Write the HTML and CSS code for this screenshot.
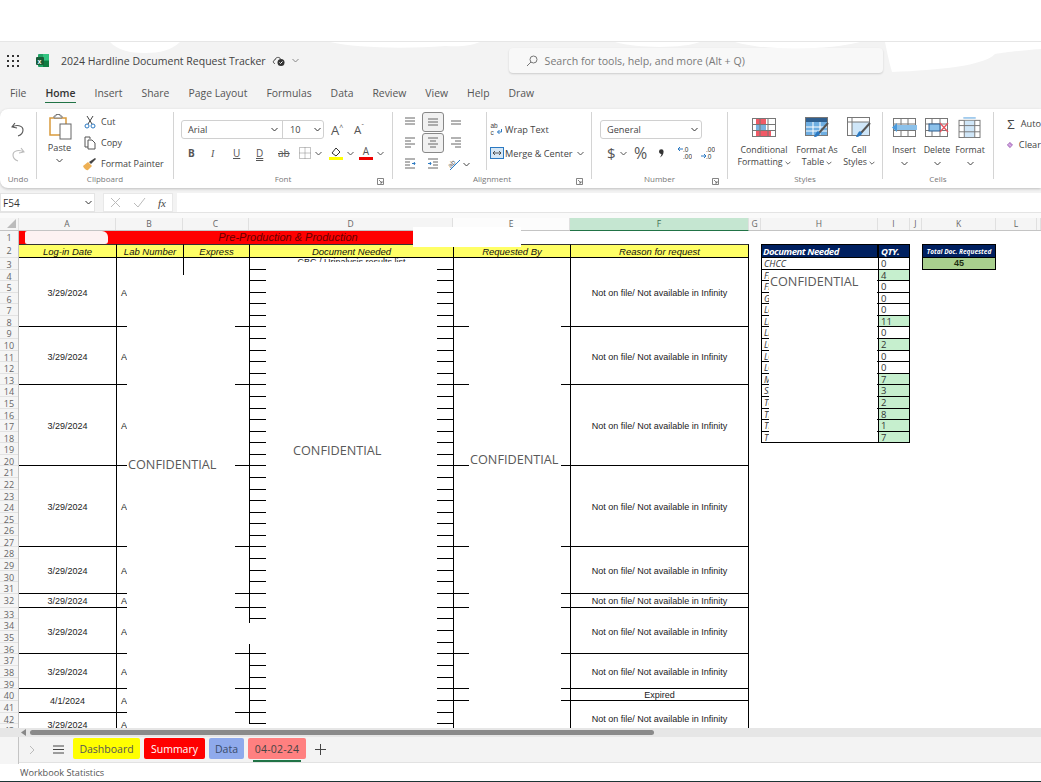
FILE: index.html
```html
<!DOCTYPE html>
<html lang="en">
<head>
<meta charset="utf-8">
<title>2024 Hardline Document Request Tracker</title>
<link rel="stylesheet" href="styles.css">
</head>
<body>
<div class="app">
  <div class="browser-strip"></div>
  <header class="titlebar">
    <svg class="waffle" width="13" height="12" viewBox="0 0 13 12"><g fill="#333"><rect x="0" y="0" width="2" height="2"/><rect x="5" y="0" width="2" height="2"/><rect x="10" y="0" width="2" height="2"/><rect x="0" y="5" width="2" height="2"/><rect x="5" y="5" width="2" height="2"/><rect x="10" y="5" width="2" height="2"/><rect x="0" y="10" width="2" height="2"/><rect x="5" y="10" width="2" height="2"/><rect x="10" y="10" width="2" height="2"/></g></svg>
    <svg class="xl" width="13" height="13" viewBox="0 0 13 13"><rect x="2" y="0" width="11" height="13" rx="1" fill="#21a366"/><rect x="7" y="0" width="6" height="6" fill="#33c481"/><rect x="7" y="7" width="6" height="6" fill="#107c41"/><rect x="0" y="3" width="8" height="8" rx="1" fill="#185c37"/><text x="1.6" y="9.6" class="xl-x">x</text></svg>
    <span class="doc-title">2024 Hardline Document Request Tracker</span>
    <svg class="cloud" width="14" height="12" viewBox="0 0 14 12"><path d="M3 8.5C.8 8.5.8 5.2 3 5 3.4 2 7.500 1.500 8.500 4" fill="none" stroke="#444"/><circle cx="9" cy="7.500" r="3.500" fill="#333"/><path d="M7.500 7.500l1 1 2-2" fill="none" stroke="#fff"/></svg>
    <svg class="chev title-chev" width="7" height="5" viewBox="0 0 7 5"><path d="M.5 1l3 3 3-3" fill="none" stroke="#888"/></svg>
    <div class="search">
      <svg width="12" height="12" viewBox="0 0 12 12"><circle cx="7.500" cy="4.500" r="3.500" fill="none" stroke="#777"/><path d="M5 7L1 11" stroke="#777"/></svg>
      <span>Search for tools, help, and more (Alt + Q)</span>
    </div>
  </header>
  <nav class="menu">
    <span>File</span><span class="on">Home</span><span>Insert</span><span>Share</span><span>Page Layout</span><span>Formulas</span><span>Data</span><span>Review</span><span>View</span><span>Help</span><span>Draw</span>
  </nav>

  <section class="ribbon">
    <div class="group g-undo">
      <div class="g-body undo-body">
        <svg width="16" height="16" viewBox="0 0 16 16"><path d="M5 2L2 6l5 1M2.500 6C6 3.500 13 4 13 9c0 3-2 5-5 6" fill="none" stroke="#555" stroke-width="1.100"/></svg>
        <svg width="16" height="16" viewBox="0 0 16 16"><path d="M11 2l3 4-5 1M13.500 6C10 3.500 3 4 3 9c0 3 2 5 5 6" fill="none" stroke="#bbb" stroke-width="1.100"/></svg>
      </div>
      <div class="g-label">Undo</div>
    </div>

    <div class="group g-clip">
      <div class="g-body clip-body">
        <div class="paste">
          <svg width="24" height="26" viewBox="0 0 24 26"><path d="M1 4h16v17H1z" fill="#fff" stroke="#d99a3c" stroke-width="1.500"/><path d="M5 4h8V2H11V.5H7V2H5z" fill="#fff" stroke="#777"/><rect x="11" y="10" width="11" height="15" fill="#fff" stroke="#666"/></svg>
          <span>Paste</span>
          <svg class="chev" width="7" height="5" viewBox="0 0 7 5"><path d="M.5 1l3 3 3-3" fill="none" stroke="#444"/></svg>
        </div>
        <div class="clip-list">
          <div class="clip-row"><svg width="14" height="14" viewBox="0 0 12 14"><path d="M3 1l5 8M9 1L4 9" fill="none" stroke="#444"/><circle cx="3" cy="11" r="2" fill="none" stroke="#2b79c2"/><circle cx="9" cy="11" r="2" fill="none" stroke="#2b79c2"/></svg><span>Cut</span></div>
          <div class="clip-row"><svg width="14" height="14" viewBox="0 0 12 14"><path d="M1 1h5v2M1 1v10h3" fill="none" stroke="#555"/><path d="M4 4h4l3 3v6H4z" fill="#fff" stroke="#555"/></svg><span>Copy</span></div>
          <div class="clip-row"><svg width="14" height="14" viewBox="0 0 14 14"><path d="M0 9l5-4 4 4-4 4c-2 1-4-2-5-4z" fill="#eeb054"/><path d="M6 5l2 2 5-5-1-1z" fill="#444"/></svg><span>Format Painter</span></div>
        </div>
      </div>
      <div class="g-label">Clipboard</div>
    </div>

    <div class="group g-font">
      <div class="g-body font-body">
        <div class="font-top">
          <div class="combo">
            <div class="combo-name"><span>Arial</span><svg width="7" height="5" viewBox="0 0 7 5"><path d="M.5 1l3 3 3-3" fill="none" stroke="#333"/></svg></div>
            <div class="combo-size"><span>10</span><svg width="7" height="5" viewBox="0 0 7 5"><path d="M.5 1l3 3 3-3" fill="none" stroke="#333"/></svg></div>
          </div>
          <span class="grow">A<sup>^</sup></span>
          <span class="grow small">A<sup>ˇ</sup></span>
        </div>
        <div class="font-tools">
          <b>B</b><i class="serif">I</i><u>U</u><u class="dbl">D</u><s>ab</s>
          <span class="tool-chev"><svg width="12" height="12" viewBox="0 0 12 12"><path d="M.5.500h11v11H.5zM6 .5v11M.5 6h11" fill="none" stroke="#888" stroke-dasharray="1 1"/></svg><svg width="7" height="5" viewBox="0 0 7 5"><path d="M.5 1l3 3 3-3" fill="none" stroke="#555"/></svg></span>
          <span class="tool-chev"><svg width="14" height="14" viewBox="0 0 14 14"><path d="M3 7l4-5 4 4-4 4z" fill="#fff" stroke="#333"/><rect x="0" y="11" width="14" height="3" fill="#ff0"/></svg><svg width="7" height="5" viewBox="0 0 7 5"><path d="M.5 1l3 3 3-3" fill="none" stroke="#555"/></svg></span>
          <span class="tool-chev"><span class="font-color">A</span><svg width="7" height="5" viewBox="0 0 7 5"><path d="M.5 1l3 3 3-3" fill="none" stroke="#555"/></svg></span>
        </div>
      </div>
      <div class="g-label">Font</div>
      <svg class="launch" width="7" height="7" viewBox="0 0 7 7"><path d="M.5 6.500V.5h6v6zM2 2l3 3M5 3v2H3" fill="none" stroke="#666" stroke-width=".8"/></svg>
    </div>

    <div class="group g-align">
      <div class="g-body align-body">
        <div class="align-grid">
          <span class="a-ic"><svg width="12" height="10" viewBox="0 0 12 10"><path d="M1 1h10M1 4h10M1 7h10" stroke="#666"/></svg></span>
          <span class="a-ic sel"><svg width="12" height="10" viewBox="0 0 12 10"><path d="M1 2h10M1 5h10M1 8h10" stroke="#666"/></svg></span>
          <span class="a-ic"><svg width="12" height="10" viewBox="0 0 12 10"><path d="M1 4h10M1 7h10" stroke="#666"/></svg></span>
          <span class="a-ic"><svg width="12" height="12" viewBox="0 0 12 12"><path d="M1 1h10M1 4h6M1 7h10M1 10h6" stroke="#666"/></svg></span>
          <span class="a-ic sel"><svg width="12" height="12" viewBox="0 0 12 12"><path d="M1 1h10M3 4h6M1 7h10M3 10h6" stroke="#666"/></svg></span>
          <span class="a-ic"><svg width="12" height="12" viewBox="0 0 12 12"><path d="M1 1h10M5 4h6M1 7h10M5 10h6" stroke="#666"/></svg></span>
          <span class="a-ic"><svg width="12" height="12" viewBox="0 0 12 12"><path d="M1 1h10M1 4h5M1 7h5M1 10h10" stroke="#666"/><path d="M8 5.500h3M10 4l1 1.500-1 1.500" stroke="#2b79c2" fill="none"/></svg></span>
          <span class="a-ic"><svg width="12" height="12" viewBox="0 0 12 12"><path d="M1 1h10M6 4h5M6 7h5M1 10h10" stroke="#666"/><path d="M1 5.500h3M3 4l1 1.500-1 1.500" stroke="#2b79c2" fill="none"/></svg></span>
          <span class="a-ic orient"><svg width="14" height="14" viewBox="0 0 14 14"><text x="1" y="9" class="orient-t" transform="rotate(-45 5 7)">ab</text><path d="M3 13L13 3" stroke="#2b79c2"/></svg><svg width="7" height="5" viewBox="0 0 7 5"><path d="M.5 1l3 3 3-3" fill="none" stroke="#444"/></svg></span>
        </div>
        <div class="wrap-list">
          <div class="wrap-row"><svg width="14" height="14" viewBox="0 0 13 14"><text x="0" y="6" class="wrap-t">ab</text><text x="0" y="13" class="wrap-t">c</text><path d="M7 10h4V7M7 10l2-2M7 10l2 2" fill="none" stroke="#2b79c2"/></svg><span>Wrap Text</span></div>
          <div class="wrap-row"><svg width="14" height="14" viewBox="0 0 14 14"><rect x=".5" y="1.500" width="13" height="11" fill="#d6e7f5" stroke="#2b79c2"/><path d="M3 7h8M3 7l2-2M3 7l2 2M11 7L9 5M11 7L9 9" fill="none" stroke="#333" stroke-width=".8"/></svg><span>Merge &amp; Center</span><svg width="7" height="5" viewBox="0 0 7 5"><path d="M.5 1l3 3 3-3" fill="none" stroke="#555"/></svg></div>
        </div>
      </div>
      <div class="g-label">Alignment</div>
      <svg class="launch" width="7" height="7" viewBox="0 0 7 7"><path d="M.5 6.500V.5h6v6zM2 2l3 3M5 3v2H3" fill="none" stroke="#666" stroke-width=".8"/></svg>
    </div>

    <div class="group g-num">
      <div class="g-body num-body">
        <div class="combo general"><span>General</span><svg width="7" height="5" viewBox="0 0 7 5"><path d="M.5 1l3 3 3-3" fill="none" stroke="#333"/></svg></div>
        <div class="num-tools">
          <span class="n-dollar">$</span>
          <svg class="n-chev" width="7" height="5" viewBox="0 0 7 5"><path d="M.5 1l3 3 3-3" fill="none" stroke="#555"/></svg>
          <span class="n-pct">%</span>
          <svg class="n-comma" width="5" height="9" viewBox="0 0 5 9"><path d="M0 2.500a2.300 2.300 0 1 1 4.600 0C4.600 5.500 3 7.500.8 8.500 2 7 2.500 6 2.400 5 1 5 0 4 0 2.500z" fill="#333"/></svg>
          <svg class="n-dec" width="14" height="14" viewBox="0 0 14 14"><text x="5" y="6" class="dec">.0</text><text x="5" y="13" class="dec">.00</text><path d="M0 3h5M0 3l2-2M0 3l2 2" fill="none" stroke="#2b79c2"/></svg>
          <svg class="n-dec" width="14" height="14" viewBox="0 0 14 14"><text x="5" y="6" class="dec">.00</text><text x="5" y="13" class="dec">.0</text><path d="M0 10h5M5 10L3 8M5 10l-2 2" fill="none" stroke="#2b79c2"/></svg>
        </div>
      </div>
      <div class="g-label">Number</div>
      <svg class="launch" width="7" height="7" viewBox="0 0 7 7"><path d="M.5 6.500V.5h6v6zM2 2l3 3M5 3v2H3" fill="none" stroke="#666" stroke-width=".8"/></svg>
    </div>

    <div class="group g-styles">
      <div class="g-body big-body styles-body">
        <div class="big b-cond">
          <svg width="24" height="19" viewBox="0 0 24 19"><rect x=".5" y=".5" width="23" height="18" fill="#fff" stroke="#777"/><rect x="4" y="1" width="10" height="5" fill="#f05a67"/><rect x="4" y="7" width="10" height="5" fill="#7ab1de"/><rect x="4" y="13" width="15" height="5" fill="#f05a67"/><path d="M8 .5v18M16 .5v18M.5 6.500h23M.5 12.500h23" stroke="#777"/></svg>
          <span>Conditional<br>Formatting<svg width="6" height="4" viewBox="0 0 7 5"><path d="M.5 1l3 3 3-3" fill="none" stroke="#444"/></svg></span>
        </div>
        <div class="big b-table">
          <svg width="24" height="21" viewBox="0 0 24 21"><rect x=".5" y=".5" width="22" height="18" fill="#fff" stroke="#777"/><rect x="1" y="1" width="21" height="4" fill="#2f5f8f"/><rect x="1" y="5" width="21" height="13" fill="#6eaee2"/><path d="M8 5v13M15 5v13M1 10h21M1 14h21" stroke="#fff"/><path d="M23 6L14 16" stroke="#555" stroke-width="2"/><path d="M13 14c-2 1-3 4-4 6 3 0 6-2 6-4z" fill="#2b79c2"/></svg>
          <span>Format As<br>Table<svg width="6" height="4" viewBox="0 0 7 5"><path d="M.5 1l3 3 3-3" fill="none" stroke="#444"/></svg></span>
        </div>
        <div class="big b-cell">
          <svg width="24" height="21" viewBox="0 0 24 21"><rect x=".5" y=".5" width="22" height="18" fill="#fff" stroke="#777"/><rect x="5" y="5" width="17" height="13" fill="#cfe6f8"/><path d="M5 .5v18M.5 5h22" stroke="#777"/><path d="M23 6L14 16" stroke="#555" stroke-width="2"/><path d="M13 14c-2 1-3 4-4 6 3 0 6-2 6-4z" fill="#2b79c2"/></svg>
          <span>Cell<br>Styles<svg width="6" height="4" viewBox="0 0 7 5"><path d="M.5 1l3 3 3-3" fill="none" stroke="#444"/></svg></span>
        </div>
      </div>
      <div class="g-label">Styles</div>
    </div>

    <div class="group g-cells">
      <div class="g-body big-body cells-body">
        <div class="big b-ins">
          <svg width="25" height="19" viewBox="0 0 25 19"><rect x="1.500" y=".5" width="22" height="18" fill="#fff" stroke="#777"/><path d="M9 .5v18M16 .5v18M1.500 6h22M1.500 12.500h22" stroke="#777"/><rect x="4" y="7" width="21" height="5" fill="#8cc1ea"/><path d="M0 9.500L5 5v9z" fill="#4c9bdc"/></svg>
          <span>Insert</span>
          <svg class="chev" width="7" height="5" viewBox="0 0 7 5"><path d="M.5 1l3 3 3-3" fill="none" stroke="#444"/></svg>
        </div>
        <div class="big b-del">
          <svg width="24" height="19" viewBox="0 0 24 19"><rect x=".5" y=".5" width="22" height="18" fill="#fff" stroke="#777"/><path d="M7 .5v18M15 .5v18M.5 6h22M.5 12.500h22" stroke="#777"/><rect x="4" y="6" width="11" height="7" fill="#8cc1ea" stroke="#2f5f8f"/><path d="M15 5l8 9M23 5l-8 9" stroke="#e8555f" stroke-width="1.300"/></svg>
          <span>Delete</span>
          <svg class="chev" width="7" height="5" viewBox="0 0 7 5"><path d="M.5 1l3 3 3-3" fill="none" stroke="#444"/></svg>
        </div>
        <div class="big b-fmt">
          <svg width="24" height="22" viewBox="0 0 24 22"><path d="M5 1h13" stroke="#4c9bdc"/><rect x=".5" y="3.500" width="22" height="18" fill="#fff" stroke="#777"/><rect x="6" y="4" width="11" height="17" fill="#cfe6f8"/><path d="M6 3.500v18M17 3.500v18M.5 9h22M.5 15.500h22" stroke="#777"/></svg>
          <span>Format</span>
          <svg class="chev" width="7" height="5" viewBox="0 0 7 5"><path d="M.5 1l3 3 3-3" fill="none" stroke="#444"/></svg>
        </div>
      </div>
      <div class="g-label">Cells</div>
    </div>

    <div class="group g-edit">
      <div class="edit-row"><span class="sigma">Σ</span><span>Auto</span></div>
      <div class="edit-row"><svg width="12" height="12" viewBox="0 0 12 12"><path d="M6 .5L11.500 6 6 11.500.5 6z" fill="#c58fd8" stroke="#7f3f98"/><path d="M3 3.500L8.500 9" stroke="#fff"/></svg><span>Clear</span></div>
    </div>
  </section>

  <div class="formula">
    <div class="namebox"><span>F54</span><svg width="7" height="5" viewBox="0 0 7 5"><path d="M.5 1l3 3 3-3" fill="none" stroke="#333"/></svg></div>
    <div class="fx-btns">
      <svg width="11" height="11" viewBox="0 0 11 11"><path d="M1 1l9 9M10 1l-9 9" stroke="#bbb"/></svg>
      <svg width="13" height="11" viewBox="0 0 13 11"><path d="M1 6l4 4 7-9" fill="none" stroke="#bbb"/></svg>
      <i class="fx">fx</i>
    </div>
    <div class="fx-input"></div>
  </div>

  <div class="gap-strip"></div>

  <main class="sheet">
    <div class="colhead">
      <div class="w-r corner"><svg width="9" height="9" viewBox="0 0 9 9"><path d="M9 0v9H0z" fill="#bbb"/></svg></div>
      <div class="w-a">A</div><div class="w-b">B</div><div class="w-c">C</div><div class="w-d">D</div><div class="w-e pale">E</div><div class="w-f sel">F</div><div class="w-g">G</div><div class="w-h">H</div><div class="w-i">I</div><div class="w-j">J</div><div class="w-k">K</div><div class="w-l">L</div><div class="w-m"></div>
    </div>
    <div class="band">
      <div class="w-r rn">1</div>
      <div class="w-a red"></div>
      <div class="w-merge red title-cell">Pre-Production &amp; Production</div>
    </div>
    <div class="columns">
      <div class="col w-r rownums">
        <div>2</div><div>3</div><div>4</div><div>5</div><div>6</div><div>7</div><div>8</div><div>9</div><div>10</div><div>11</div><div>12</div><div>13</div><div>14</div><div>15</div><div>16</div><div>17</div><div>18</div><div>19</div><div>20</div><div>21</div><div>22</div><div>23</div><div>24</div><div>25</div><div>26</div><div>27</div><div>28</div><div>29</div><div>30</div><div>31</div><div>32</div><div>33</div><div>34</div><div>35</div><div>36</div><div>37</div><div>38</div><div>39</div><div>40</div><div>41</div><div>42</div><div>43</div>
      </div>

      <div class="col w-a data">
        <div class="hd">Log-in Date</div>
        <div class="s6">3/29/2024</div><div class="s5">3/29/2024</div><div class="s7">3/29/2024</div><div class="s7">3/29/2024</div><div class="s4">3/29/2024</div><div class="s1">3/29/2024</div><div class="s4">3/29/2024</div><div class="s3">3/29/2024</div><div class="s2">4/1/2024</div><div class="s2">3/29/2024</div>
      </div>
      <div class="col w-b data lined left-text">
        <div class="hd">Lab Number</div>
        <div class="s6">A</div><div class="s5">A</div><div class="s7">A</div><div class="s7">A</div><div class="s4">A</div><div class="s1">A</div><div class="s4">A</div><div class="s3">A</div><div class="s2">A</div><div class="s2">A</div>
      </div>
      <div class="col w-c data lined">
        <div class="hd">Express</div>
        <div class="s6"></div><div class="s5"></div><div class="s7"></div><div class="s7"></div><div class="s4"></div><div class="s1"></div><div class="s4"></div><div class="s3"></div><div class="s2"></div><div class="s2"></div>
      </div>
      <div class="col w-d data lined ticks">
        <div class="hd">Document Needed</div>
        <div class="top-text">CBC / Urinalysis results list</div><div></div><div></div><div></div><div></div><div></div><div></div><div></div><div></div><div></div><div></div><div></div><div></div><div></div><div></div><div></div><div></div><div></div><div></div><div></div><div></div><div></div><div></div><div></div><div></div><div></div><div></div><div></div><div></div><div></div><div></div><div></div><div></div><div></div><div></div><div></div><div></div><div></div><div></div><div></div>
      </div>
      <div class="col w-e data lined">
        <div class="hd">Requested By</div>
        <div class="s6"></div><div class="s5"></div><div class="s7"></div><div class="s7"></div><div class="s4"></div><div class="s1"></div><div class="s4"></div><div class="s3"></div><div class="s1"></div><div class="s3"></div>
      </div>
      <div class="col w-f data lined end">
        <div class="hd">Reason for request</div>
        <div class="s6">Not on file/ Not available in Infinity</div><div class="s5">Not on file/ Not available in Infinity</div><div class="s7">Not on file/ Not available in Infinity</div><div class="s7">Not on file/ Not available in Infinity</div><div class="s4">Not on file/ Not available in Infinity</div><div class="s1">Not on file/ Not available in Infinity</div><div class="s4">Not on file/ Not available in Infinity</div><div class="s3">Not on file/ Not available in Infinity</div><div class="s1 tight">Expired</div><div class="s3">Not on file/ Not available in Infinity</div>
      </div>
      <div class="col w-g"></div>
      <div class="col w-h summary">
        <div class="navy">Document Needed</div>
        <div>CHCC</div><div>FI</div><div>FI</div><div>G</div><div>Lo</div><div>LI</div><div>LI</div><div>LC</div><div>LC</div><div>LC</div><div>M</div><div>SI</div><div>Te</div><div>TI</div><div>TI</div><div>T</div>
      </div>
      <div class="col w-i qty">
        <div class="navy">QTY.</div>
        <div>0</div><div class="g">4</div><div>0</div><div>0</div><div>0</div><div class="g">11</div><div>0</div><div class="g">2</div><div>0</div><div>0</div><div class="g">7</div><div class="g">3</div><div class="g">2</div><div class="g">8</div><div class="g">1</div><div class="g">7</div>
      </div>
      <div class="col w-j"></div>
      <div class="col w-k total">
        <div class="navy">Total Doc. Requested</div>
        <div class="sum">45</div>
      </div>
    </div>

    <div class="mask m-a1"></div>
    <div class="mask m-head"></div>
    <div class="mask m-bc">CONFIDENTIAL</div>
    <div class="mask m-d">CONFIDENTIAL</div>
    <div class="mask m-gap"></div>
    <div class="mask m-e">CONFIDENTIAL</div>
    <div class="mask m-h">CONFIDENTIAL</div>
  </main>

  <div class="hscroll"><svg width="6" height="7" viewBox="0 0 6 7"><path d="M5 0v7L0 3.500z" fill="#888"/></svg><div class="thumb"></div></div>

  <div class="tabsbar">
    <svg width="6" height="10" viewBox="0 0 6 10"><path d="M5 1L1 5l4 4" fill="none" stroke="#aaa"/></svg>
    <svg class="tab-next" width="6" height="10" viewBox="0 0 6 10"><path d="M1 1l4 4-4 4" fill="none" stroke="#bbb"/></svg>
    <svg class="tab-menu" width="11" height="9" viewBox="0 0 11 9"><path d="M0 1h11M0 4.500h11M0 8h11" stroke="#444"/></svg>
    <div class="tabs">
      <span class="tab t-dash">Dashboard</span>
      <span class="tab t-sum">Summary</span>
      <span class="tab t-data">Data</span>
      <span class="tab t-date">04-02-24</span>
    </div>
    <svg class="tab-add" width="11" height="11" viewBox="0 0 11 11"><path d="M5.500 0v11M0 5.500h11" stroke="#444"/></svg>
  </div>
  <footer class="status">Workbook Statistics</footer>

  <svg class="blobs" width="1041" height="72" viewBox="0 0 1041 72"><g fill="#fff"><path d="M110 42h70c-8 8-20 11-35 11s-28-3-35-11z"/><path d="M330 42h150c-10 4-20 5-35 4-40 3-90 2-115-4z"/><path d="M615 42h85c-15 6-60 7-85 0z"/><path d="M735 42h125c-25 7-90 10-125 0z"/><path d="M885 42h156v7c-25 2-35 3-46 5-12 12-55 16-103 18-3-10-5-20-7-30z"/></g></svg>
</div>
</body>
</html>
```
FILE: styles.css
```css
* { box-sizing: border-box; }
html, body { margin: 0; padding: 0; background: #fff; }
body { overflow: hidden; }

.app {
  --ui: "Open Sans", "Noto Sans", sans-serif;
  --rows: 14px repeat(29, 11.59px) 14px repeat(12, 11.65px);
  position: relative;
  width: 1041px;
  height: 782px;
  display: flex;
  flex-direction: column;
  background: #f3f3f3;
  font-family: var(--ui);
  color: #424242;
  overflow: hidden;
}

.browser-strip { height: 42px; flex: none; background: #fff; border-bottom: 1px solid #e6e6e6; }

/* title bar */
.titlebar { height: 36px; flex: none; display: flex; align-items: center; padding: 1px 0 0 7px; }
.xl { margin-left: 16px; }
.xl-x { font: bold 7px "Liberation Sans", sans-serif; fill: #fff; }
.doc-title { margin-left: 12px; font-size: 10.5px; color: #424242; white-space: nowrap; }
.cloud { margin-left: 6px; }
.title-chev { margin-left: 6px; }
.search {
  margin-left: 210px; width: 374px; height: 25px; display: flex; align-items: center; gap: 7px;
  padding-left: 17px; background: #f8f8f8; border-radius: 4px; box-shadow: 0 1px 2px rgba(0,0,0,.16);
  font-size: 10.6px; color: #7a7a7a;
}

/* menu */
.menu { height: 31px; flex: none; display: flex; gap: 19px; padding: 5px 0 0 10px; font-size: 10.4px; color: #555; }
.menu span { height: 20px; line-height: 20px; white-space: nowrap; }
.menu .on { color: #333; font-weight: 600; border-bottom: 1px solid #217346; }

/* ribbon */
.ribbon {
  height: 79px; flex: none; display: flex; background: #fff; border-radius: 8px 0 0 8px;
  box-shadow: 0 1px 3px rgba(0,0,0,.22); font-size: 9.2px; color: #444;
}
.group { position: relative; flex: none; display: flex; flex-direction: column; border-right: 1px solid #d4d4d4; margin: 3px 0 9px; }
.g-body { flex: 1; min-height: 0; }
.g-label { height: 14px; text-align: center; font-size: 8px; line-height: 14px; color: #777; margin-bottom: -7px; }
.launch { position: absolute; right: 8px; bottom: -6px; }
.g-undo { width: 37px; }
.g-clip { width: 137px; }
.g-font { width: 219px; }
.g-align { width: 199px; }
.g-num { width: 136px; }
.g-styles { width: 155px; }
.g-cells { width: 111px; }
.g-edit { flex: 1; min-width: 0; border: 0; padding: 3px 0 0 13px; gap: 4px; }

.undo-body { display: flex; flex-direction: column; align-items: center; gap: 9px; padding-top: 9px; }
.clip-body { display: flex; padding: 2px 0 0 12px; }
.paste { width: 24px; display: flex; flex-direction: column; align-items: center; }
.paste span { margin-top: 1px; margin-left: -3px; }
.paste .chev { margin-top: 4px; margin-left: -3px; }
.clip-list { margin-left: 10px; display: flex; flex-direction: column; gap: 6px; }
.clip-row { display: flex; align-items: center; gap: 4px; height: 15px; white-space: nowrap; font-size: 9px; }
.clip-row svg { flex: none; }

.font-body { padding: 8px 0 0 7px; }
.font-top { display: flex; align-items: center; }
.combo { display: flex; height: 19px; border: 1px solid #d0d0d0; border-radius: 3px; width: 143px; }
.combo-name { width: 101px; display: flex; justify-content: space-between; align-items: center; padding: 0 4px 0 6px; border-right: 1px solid #d0d0d0; }
.combo-size { flex: 1; display: flex; justify-content: space-between; align-items: center; padding: 0 2px 0 7px; }
.grow { font-size: 13px; margin-left: 7px; width: 14px; color: #555; }
.grow.small { font-size: 11.5px; margin-left: 9px; }
.grow sup { font-size: 7px; line-height: 0; }
.font-tools { display: flex; align-items: center; height: 18px; margin-top: 5px; padding-left: 7px; font-size: 10px; color: #555; }
.font-tools b { width: 23px; }
.font-tools .serif { width: 22px; font-family: "Liberation Serif", serif; }
.font-tools u { width: 23px; }
.font-tools .dbl { text-decoration-style: double; width: 22px; }
.font-tools s { width: 21px; }
.tool-chev { display: inline-flex; align-items: center; gap: 4px; width: 30px; }
.font-color { width: 14px; text-align: center; border-bottom: 3px solid #e00; line-height: 11px; font-size: 10px; }

.align-body { display: flex; }
.align-grid { width: 88px; margin-left: 6px; display: grid; grid-template-columns: repeat(3, 22px); grid-auto-rows: 20px; gap: 1px 1px; height: 58px; border-right: 1px solid #d4d4d4; }
.a-ic { display: flex; align-items: center; justify-content: center; width: 22px; height: 20px; }
.a-ic.sel { border: 1px solid #888; border-radius: 3px; background: #f1f1f1; }
.orient { gap: 2px; width: 26px; }
.orient-t { font: 7px "Liberation Sans", sans-serif; fill: #666; }
.wrap-list { margin-left: 3px; padding-top: 10px; display: flex; flex-direction: column; gap: 10px; }
.wrap-row { display: flex; align-items: center; gap: 1px; height: 14px; white-space: nowrap; }
.wrap-row span { margin-right: 3px; }
.wrap-t { font: 6.500px "Liberation Sans", sans-serif; fill: #444; }

.num-body { padding: 8px 0 0 8px; }
.general { width: 102px; justify-content: space-between; align-items: center; padding: 0 3px 0 6px; }
.num-tools { display: flex; align-items: center; height: 18px; margin-top: 5px; padding-left: 7px; color: #555; }
.n-dollar { font-size: 15px; width: 13px; }
.n-chev { margin-right: 7px; }
.n-pct { font-size: 16px; width: 25px; }
.n-comma { margin-right: 14px; }
.n-dec { margin-right: 9px; }
.dec { font: 6.500px "Liberation Sans", sans-serif; fill: #333; }

.big-body { display: flex; padding-top: 5px; }
.big { display: flex; flex-direction: column; align-items: center; text-align: center; line-height: 12px; font-size: 8.8px; white-space: nowrap; }
.big svg:first-child { height: 21px; margin-bottom: 6px; }
.big span svg { margin-left: 2px; }
.big .chev { margin-top: 5px; }
.styles-body { padding-left: 8px; }
.b-cond { width: 56px; }
.b-table { width: 50px; }
.b-cell { width: 34px; }
.cells-body { padding-left: 7px; }
.b-ins { width: 28px; }
.b-del { width: 28px; margin-left: 5px; }
.b-fmt { width: 30px; margin-left: 4px; }
.edit-row { display: flex; align-items: center; gap: 6px; height: 17px; white-space: nowrap; }
.sigma { font-size: 13px; width: 12px; text-align: center; }

/* formula bar */
.formula { height: 19px; flex: none; margin-top: 5px; display: flex; gap: 8px; font-size: 9.5px; }
.namebox { width: 95px; background: #fff; border: 1px solid #e4e4e4; display: flex; align-items: center; justify-content: space-between; padding: 0 2px 0 2px; color: #333; font-size: 10px; }
.fx-btns { width: 70px; background: #fff; border: 1px solid #e8e8e8; display: flex; align-items: center; gap: 12px; padding-left: 6px; }
.fx { font-family: "Liberation Serif", serif; font-size: 11px; color: #444; }
.fx-input { flex: 1; background: #fff; margin-left: -4px; }
.gap-strip { height: 6px; flex: none; background: #fafafa; border-top: 1px solid #e4e4e4; }

/* sheet */
.sheet { position: relative; flex: none; height: 510px; background: #fff; }
.colhead { display: flex; height: 13px; background: #f5f5f5; border-bottom: 1px solid #c4c4c4; font-size: 8.5px; line-height: 12px; text-align: center; color: #666; }
.colhead > div { border-right: 1px solid #e0e0e0; }
.colhead .pale { background: #fcfcfc; }
.colhead .sel { background: #c5e6d1; border-bottom: 1px solid #217346; height: 13px; color: #3d6f52; }
.corner { display: flex; align-items: flex-end; justify-content: flex-end; padding: 0 2px 2px 0; }
.w-r { width: 19px; flex: none; }
.w-a { width: 97px; flex: none; }
.w-b { width: 67px; flex: none; }
.w-c { width: 66px; flex: none; }
.w-d { width: 204px; flex: none; }
.w-e { width: 117px; flex: none; }
.w-f { width: 179px; flex: none; }
.w-g { width: 12px; flex: none; }
.w-h { width: 117px; flex: none; }
.w-i { width: 32px; flex: none; }
.w-j { width: 12px; flex: none; }
.w-k { width: 74px; flex: none; }
.w-l { width: 41px; flex: none; }
.w-m { flex: 1; }
.w-merge { width: 337px; flex: none; }

.band { display: flex; height: 13px; }
.rn { background: #f5f5f5; border-right: 1px solid #c4c4c4; font-size: 9px; color: #666; text-align: center; line-height: 14px; }
.rownums { background: #f5f5f5; border-right: 1px solid #c4c4c4; }
.rownums > div { border-bottom: 1px solid #e2e2e2; font: 9px/10px var(--ui); color: #666; text-align: center; padding-top: 2px; }
.red { background: #f00; }
.title-cell { padding-left: 7px; text-align: center; font: italic 11px/13px "Liberation Sans", sans-serif; color: #660000; }

.columns { display: flex; }
.col { display: grid; grid-template-rows: var(--rows); align-content: start; font: 9px "Liberation Sans", Arial, sans-serif; color: #222; height: 520px; }

.data > div { display: flex; align-items: center; justify-content: center; padding-top: 2px; border-bottom: 1px solid #000; white-space: nowrap; }
.data.lined > div { border-left: 1px solid #000; }
.data.left-text > div:not(.hd) { justify-content: flex-start; padding-left: 4px; }
.data.end > div { border-right: 1px solid #000; }
.data .tight { padding-top: 0; }
.data .hd { padding-top: 0; background: #ffff66; font-style: italic; font-size: 9.500px; color: #111; border-top: 1px solid #333; }
.data .top-text { align-items: flex-start; padding-top: 0; overflow: hidden; line-height: 9px; font-size: 9px; }

.s1 { grid-row: span 1; }
.s2 { grid-row: span 2; }
.s3 { grid-row: span 3; }
.s4 { grid-row: span 4; }
.s5 { grid-row: span 5; }
.s6 { grid-row: span 6; }
.s7 { grid-row: span 7; }

.navy { background: #002060; color: #fff; font-weight: 700; font-style: italic; font-size: 9.500px; line-height: 13px; border: 1px solid #000; font-family: var(--ui); white-space: nowrap; letter-spacing: -.45px; }
.summary > div:not(.navy) { border: 1px solid #000; border-top: 0; border-right: 0; padding-left: 2px; font: italic 9px/12px var(--ui); color: #333; }
.summary .navy { padding-left: 1px; }
.qty > div:not(.navy) { border: 1px solid #000; border-top: 0; padding-left: 2px; font: 9.500px/11px var(--ui); color: #333; }
.qty .g { background: #c6efce; color: #1e6b2e; }
.qty .navy { padding-left: 2px; }
.total .navy { font-size: 6.500px; text-align: center; padding: 0; letter-spacing: 0; }
.total .sum { background: #a9d08e; border: 1px solid #000; border-top: 0; text-align: center; font: 700 9px/10px "Liberation Sans", sans-serif; color: #1f2f12; }

/* white cover-ups laid over the grid */
.mask { position: absolute; background: #fff; color: #595959; font-size: 12.7px; white-space: nowrap; }
.m-a1 { left: 25px; top: 13px; width: 83px; height: 13px; background: #fdf2f2; border-radius: 2px 6px 3px 2px; }
.m-head { left: 413px; top: 9px; width: 108px; height: 20px; }
.m-bc { left: 127px; top: 57px; width: 108px; height: 457px; padding: 180px 0 0 1px; }
.m-d { left: 266px; top: 44px; width: 171px; height: 466px; padding: 179px 0 0 27px; }
.m-gap { left: 245px; top: 405px; width: 21px; height: 21px; }
.m-e { left: 469px; top: 41px; width: 92px; height: 469px; padding: 191px 0 0 1px; }
.m-h { left: 769px; top: 52px; width: 108px; height: 170px; padding: 2px 0 0 1px; line-height: 18px; }

.hscroll { position: relative; height: 9px; flex: none; background: #e6e6e6; display: flex; align-items: center; padding-left: 21px; gap: 3px; }
.thumb { width: 624px; height: 5px; background: #8a8a8a; border-radius: 3px; }

.tabsbar { height: 25px; flex: none; display: flex; align-items: center; padding-left: 3px; background: #f3f3f3; }
.tabsbar > svg { flex: none; }
.tab-next { margin-left: 20px; }
.tab-menu { margin-left: 18px; }
.tabs { display: flex; gap: 4px; margin-left: 9px; font-size: 10.500px; height: 21px; align-self: flex-start; margin-top: 1px; }
.tab { display: flex; align-items: center; justify-content: center; height: 21px; border-radius: 2px; }
.t-dash { width: 67px; background: #ff0; color: #555; }
.t-sum { width: 61px; background: #f00; color: #fff; }
.t-data { width: 35px; background: #8faaec; color: #3a4a6a; }
.t-date { width: 58px; background: #ff8080; color: #444; position: relative; letter-spacing: .2px; }
.t-date::after { content: ""; position: absolute; left: 5px; right: 5px; bottom: -3px; height: 2px; background: #217346; }
.tab-add { margin-left: 9px; }

.status { height: 20px; flex: none; background: #fff; border-top: 1px solid #e2e2e2; border-bottom: 1px solid #1d3535; padding-left: 20px; font-size: 9.200px; line-height: 20px; color: #555; }

.blobs { position: absolute; left: 0; top: 0; pointer-events: none; }
```
